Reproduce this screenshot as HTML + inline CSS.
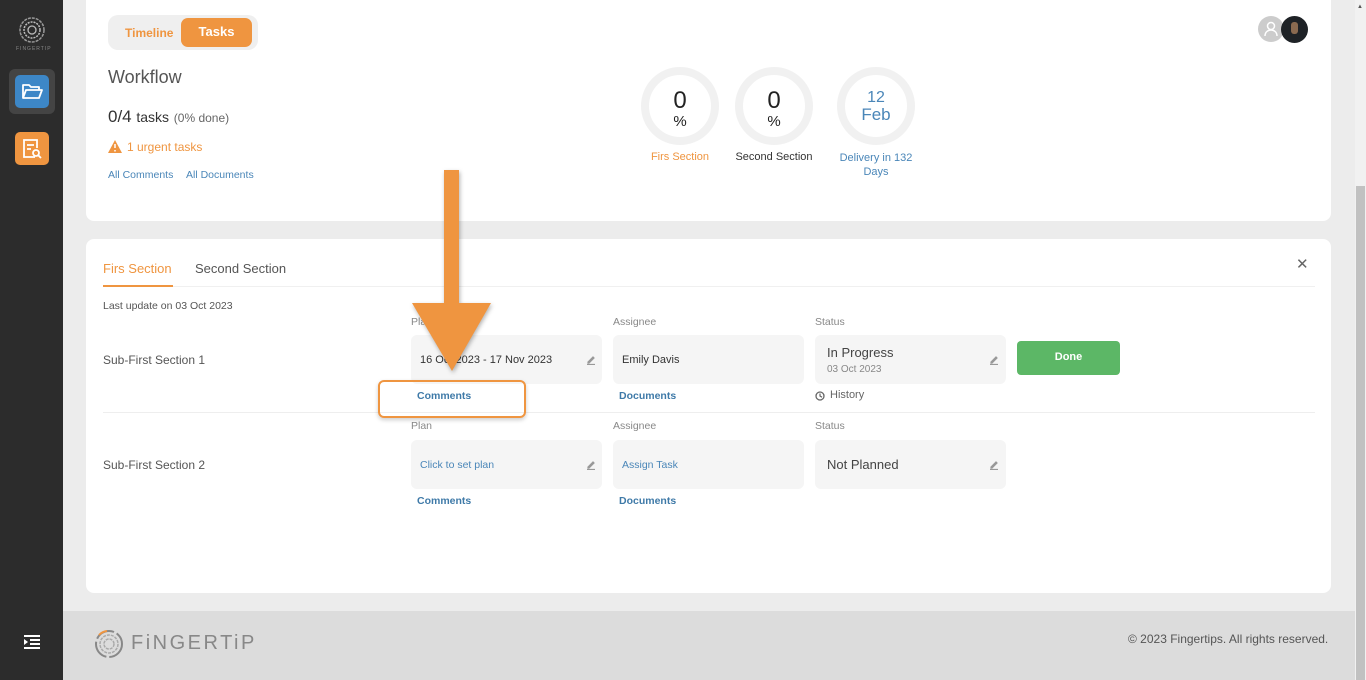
<!DOCTYPE html>
<html><head><meta charset="utf-8"><style>
*{margin:0;padding:0;box-sizing:border-box}
body{width:1366px;height:680px;overflow:hidden;background:#ececec;font-family:"Liberation Sans",sans-serif;position:relative;color:#444}
.a{position:absolute}
.side{left:0;top:0;width:63px;height:680px;background:#2c2c2c}
.card{background:#fff;border-radius:8px}
.lbl{font-size:10.5px;color:#888}
.box{background:#f5f5f5;border-radius:6px;height:49px}
.blue{color:#4a86b8}
.lnk{font-size:10.5px;color:#3f7aa8;font-weight:bold}
</style></head><body>
<div class="a side"></div>
<svg class="a" style="left:18px;top:16px" width="28" height="28" viewBox="0 0 28 28"><circle cx="14" cy="14" r="12" fill="none" stroke="#999" stroke-width="1.5" stroke-dasharray="3 1"/><circle cx="14" cy="14" r="8" fill="none" stroke="#bbb" stroke-width="1.5" stroke-dasharray="2 1"/><circle cx="14" cy="14" r="4" fill="none" stroke="#bbb" stroke-width="1.3"/></svg>
<div class="a" style="left:16px;top:46px;font-size:5px;color:#888;letter-spacing:1px">FINGERTIP</div>
<div class="a" style="left:9px;top:69px;width:46px;height:45px;background:#444;border-radius:6px"></div>
<div class="a" style="left:15px;top:75px;width:34px;height:33px;background:#3d87c7;border-radius:5px"></div>
<svg class="a" style="left:21px;top:82px" width="22" height="18" viewBox="0 0 22 18"><path d="M2 16V3h6l2 2h8v3M2 16l3-8h16l-3 8z" fill="none" stroke="#fff" stroke-width="1.8" stroke-linejoin="round"/></svg>
<div class="a" style="left:15px;top:132px;width:34px;height:33px;background:#ef9540;border-radius:5px"></div>
<svg class="a" style="left:21px;top:137px" width="22" height="24" viewBox="0 0 22 24"><path d="M14 20H3V3h13v8M6 8h7M6 12h4" fill="none" stroke="#fff" stroke-width="1.8"/><circle cx="15" cy="16" r="3" fill="none" stroke="#fff" stroke-width="1.8"/><path d="M17 18l3 3" stroke="#fff" stroke-width="1.8"/></svg>
<svg class="a" style="left:23px;top:635px" width="18" height="14" viewBox="0 0 18 14"><path d="M1 1h16M7 5h10M7 9h10M1 13h16" stroke="#fff" stroke-width="2"/><path d="M1 4l4 3-4 3z" fill="#fff"/></svg>

<div class="a card" style="left:86px;top:-10px;width:1245px;height:231px"></div>
<div class="a" style="left:108px;top:15px;width:150px;height:35px;background:#efefef;border-radius:10px"></div>
<div class="a" style="left:125px;top:26px;font-size:12px;color:#ef9540;font-weight:bold">Timeline</div>
<div class="a" style="left:181px;top:18px;width:71px;height:29px;background:#ef9540;border-radius:7px;color:#fff;font-size:13px;font-weight:bold;text-align:center;line-height:27px">Tasks</div>
<div class="a" style="left:108px;top:67px;font-size:18px;color:#555">Workflow</div>
<div class="a" style="left:108px;top:107px;font-size:17px;color:#333">0/4 <span style="font-size:14px">tasks</span> <span style="font-size:12px;color:#666">(0% done)</span></div>
<svg class="a" style="left:108px;top:140px" width="14" height="13" viewBox="0 0 14 13"><path d="M7 0L14 13H0z" fill="#ef9540"/><path d="M7 4v4M7 10v1.5" stroke="#fff" stroke-width="1.5"/></svg>
<div class="a" style="left:127px;top:140px;font-size:12px;color:#ef9540">1 urgent tasks</div>
<div class="a" style="left:108px;top:169px;font-size:10.5px;color:#4a86b8">All Comments</div>
<div class="a" style="left:186px;top:169px;font-size:10.5px;color:#4a86b8">All Documents</div>

<div class="a" style="left:1258px;top:16px;width:26px;height:26px;border-radius:50%;background:#ccc"></div>
<svg class="a" style="left:1262px;top:20px" width="18" height="18" viewBox="0 0 18 18"><circle cx="9" cy="6" r="3.5" fill="none" stroke="#fff" stroke-width="1.5"/><path d="M3 16c0-4 3-6 6-6s6 2 6 6" fill="none" stroke="#fff" stroke-width="1.5"/></svg>
<div class="a" style="left:1281px;top:16px;width:27px;height:27px;border-radius:50%;background:#1e2226"></div>
<div class="a" style="left:1291px;top:22px;width:7px;height:12px;border-radius:3px;background:#8a6a50"></div>

<div class="a" style="left:641px;top:67px;width:78px;height:78px;border-radius:50%;border:8px solid #f1f1f1"></div>
<div class="a" style="left:735px;top:67px;width:78px;height:78px;border-radius:50%;border:8px solid #f1f1f1"></div>
<div class="a" style="left:837px;top:67px;width:78px;height:78px;border-radius:50%;border:8px solid #f1f1f1"></div>
<div class="a" style="left:641px;top:88px;width:78px;text-align:center;font-size:24px;color:#222;line-height:26px">0</div>
<div class="a" style="left:641px;top:113px;width:78px;text-align:center;font-size:15px;color:#222">%</div>
<div class="a" style="left:735px;top:88px;width:78px;text-align:center;font-size:24px;color:#222;line-height:26px">0</div>
<div class="a" style="left:735px;top:113px;width:78px;text-align:center;font-size:15px;color:#222">%</div>
<div class="a" style="left:837px;top:89px;width:78px;text-align:center;font-size:16px;color:#4a86b8;line-height:17px">12<br><span style="font-size:17px">Feb</span></div>
<div class="a" style="left:620px;top:151px;width:120px;text-align:center;font-size:11px;color:#ef9540">Firs Section</div>
<div class="a" style="left:714px;top:151px;width:120px;text-align:center;font-size:11px;color:#333">Second Section</div>
<div class="a" style="left:816px;top:151px;width:120px;text-align:center;font-size:11px;color:#4a86b8;line-height:14px">Delivery in 132<br>Days</div>

<div class="a card" style="left:86px;top:239px;width:1245px;height:354px"></div>
<div class="a" style="left:103px;top:261px;font-size:13px;color:#ef9540">Firs Section</div>
<div class="a" style="left:195px;top:261px;font-size:13px;color:#555">Second Section</div>
<div class="a" style="left:103px;top:285px;width:70px;height:2px;background:#ef9540"></div>
<div class="a" style="left:173px;top:286px;width:1142px;height:1px;background:#f0f0f0"></div>
<div class="a" style="left:1296px;top:255px;font-size:15px;color:#666">✕</div>
<div class="a" style="left:103px;top:300px;font-size:10.5px;color:#555">Last update on 03 Oct 2023</div>

<div class="a lbl" style="left:411px;top:316px">Plan</div>
<div class="a lbl" style="left:613px;top:316px">Assignee</div>
<div class="a lbl" style="left:815px;top:316px">Status</div>
<div class="a" style="left:103px;top:353px;font-size:12px;color:#555">Sub-First Section 1</div>
<div class="a box" style="left:411px;top:335px;width:191px"></div>
<div class="a" style="left:420px;top:354px;font-size:11px;color:#333">16 Oct 2023 - 17 Nov 2023</div>
<svg class="a" style="left:586px;top:355px" width="10" height="10" viewBox="0 0 10 10"><path d="M2 7l5-5 1 1-5 5H2zM1 9.5h8" stroke="#999" stroke-width="1.2" fill="#999"/></svg>
<div class="a box" style="left:613px;top:335px;width:191px"></div>
<div class="a" style="left:622px;top:354px;font-size:11px;color:#333">Emily Davis</div>
<div class="a box" style="left:815px;top:335px;width:191px"></div>
<div class="a" style="left:827px;top:345px;font-size:13px;color:#444">In Progress</div>
<div class="a" style="left:827px;top:364px;font-size:10px;color:#888">03 Oct 2023</div>
<svg class="a" style="left:989px;top:355px" width="10" height="10" viewBox="0 0 10 10"><path d="M2 7l5-5 1 1-5 5H2zM1 9.5h8" stroke="#999" stroke-width="1.2" fill="#999"/></svg>
<div class="a" style="left:1017px;top:341px;width:103px;height:34px;background:#5cb766;border-radius:4px;color:#fff;font-size:11px;font-weight:bold;text-align:center;line-height:33px">Done</div>
<div class="a lnk" style="left:417px;top:390px">Comments</div>
<div class="a lnk" style="left:619px;top:390px">Documents</div>
<svg class="a" style="left:815px;top:391px" width="10" height="10" viewBox="0 0 10 10"><circle cx="5" cy="5" r="4" fill="none" stroke="#666" stroke-width="1.3"/><path d="M5 2.5V5l2 1.2" stroke="#666" stroke-width="1.2" fill="none"/></svg>
<div class="a" style="left:830px;top:389px;font-size:11px;color:#666">History</div>
<div class="a" style="left:103px;top:412px;width:1212px;height:1px;background:#eee"></div>

<div class="a lbl" style="left:411px;top:420px">Plan</div>
<div class="a lbl" style="left:613px;top:420px">Assignee</div>
<div class="a lbl" style="left:815px;top:420px">Status</div>
<div class="a" style="left:103px;top:458px;font-size:12px;color:#555">Sub-First Section 2</div>
<div class="a box" style="left:411px;top:440px;width:191px"></div>
<div class="a blue" style="left:420px;top:459px;font-size:10.5px">Click to set plan</div>
<svg class="a" style="left:586px;top:460px" width="10" height="10" viewBox="0 0 10 10"><path d="M2 7l5-5 1 1-5 5H2zM1 9.5h8" stroke="#999" stroke-width="1.2" fill="#999"/></svg>
<div class="a box" style="left:613px;top:440px;width:191px"></div>
<div class="a blue" style="left:622px;top:459px;font-size:10.5px">Assign Task</div>
<div class="a box" style="left:815px;top:440px;width:191px"></div>
<div class="a" style="left:827px;top:457px;font-size:13px;color:#444">Not Planned</div>
<svg class="a" style="left:989px;top:460px" width="10" height="10" viewBox="0 0 10 10"><path d="M2 7l5-5 1 1-5 5H2zM1 9.5h8" stroke="#999" stroke-width="1.2" fill="#999"/></svg>
<div class="a lnk" style="left:417px;top:495px">Comments</div>
<div class="a lnk" style="left:619px;top:495px">Documents</div>

<div class="a" style="left:378px;top:380px;width:148px;height:38px;border:2px solid #ef9540;border-radius:6px;box-shadow:0 2px 4px rgba(0,0,0,.2)"></div>
<svg class="a" style="left:405px;top:165px" width="95" height="215" viewBox="0 0 95 215"><path d="M39 5h15v133h32l-39 68-40-68h32z" fill="#ef9540" style="filter:drop-shadow(1px 2px 2px rgba(0,0,0,.3))"/></svg>

<div class="a" style="left:63px;top:611px;width:1292px;height:69px;background:#dcdcdc"></div>
<svg class="a" style="left:94px;top:629px" width="30" height="30" viewBox="0 0 30 30"><circle cx="15" cy="15" r="13" fill="none" stroke="#888" stroke-width="2" stroke-dasharray="20 3"/><circle cx="15" cy="15" r="9" fill="none" stroke="#aaa" stroke-width="1.5" stroke-dasharray="3 1"/><circle cx="15" cy="15" r="5" fill="none" stroke="#aaa" stroke-width="1.5" stroke-dasharray="3 1"/><path d="M5 6a13 13 0 0 1 8-4" stroke="#ef9540" stroke-width="2" fill="none"/></svg>
<div class="a" style="left:131px;top:632px;font-size:20px;color:#888;letter-spacing:2.5px">FiNGERTiP</div>
<div class="a" style="left:1128px;top:632px;font-size:12px;color:#555">© 2023 Fingertips. All rights reserved.</div>

<div class="a" style="left:1355px;top:0;width:11px;height:680px;background:#f1f1f1"></div>
<div class="a" style="left:1356px;top:186px;width:9px;height:494px;background:#c1c1c1"></div>
<div class="a" style="left:1357px;top:4px;font-size:6px;color:#555">▲</div>
</body></html>
